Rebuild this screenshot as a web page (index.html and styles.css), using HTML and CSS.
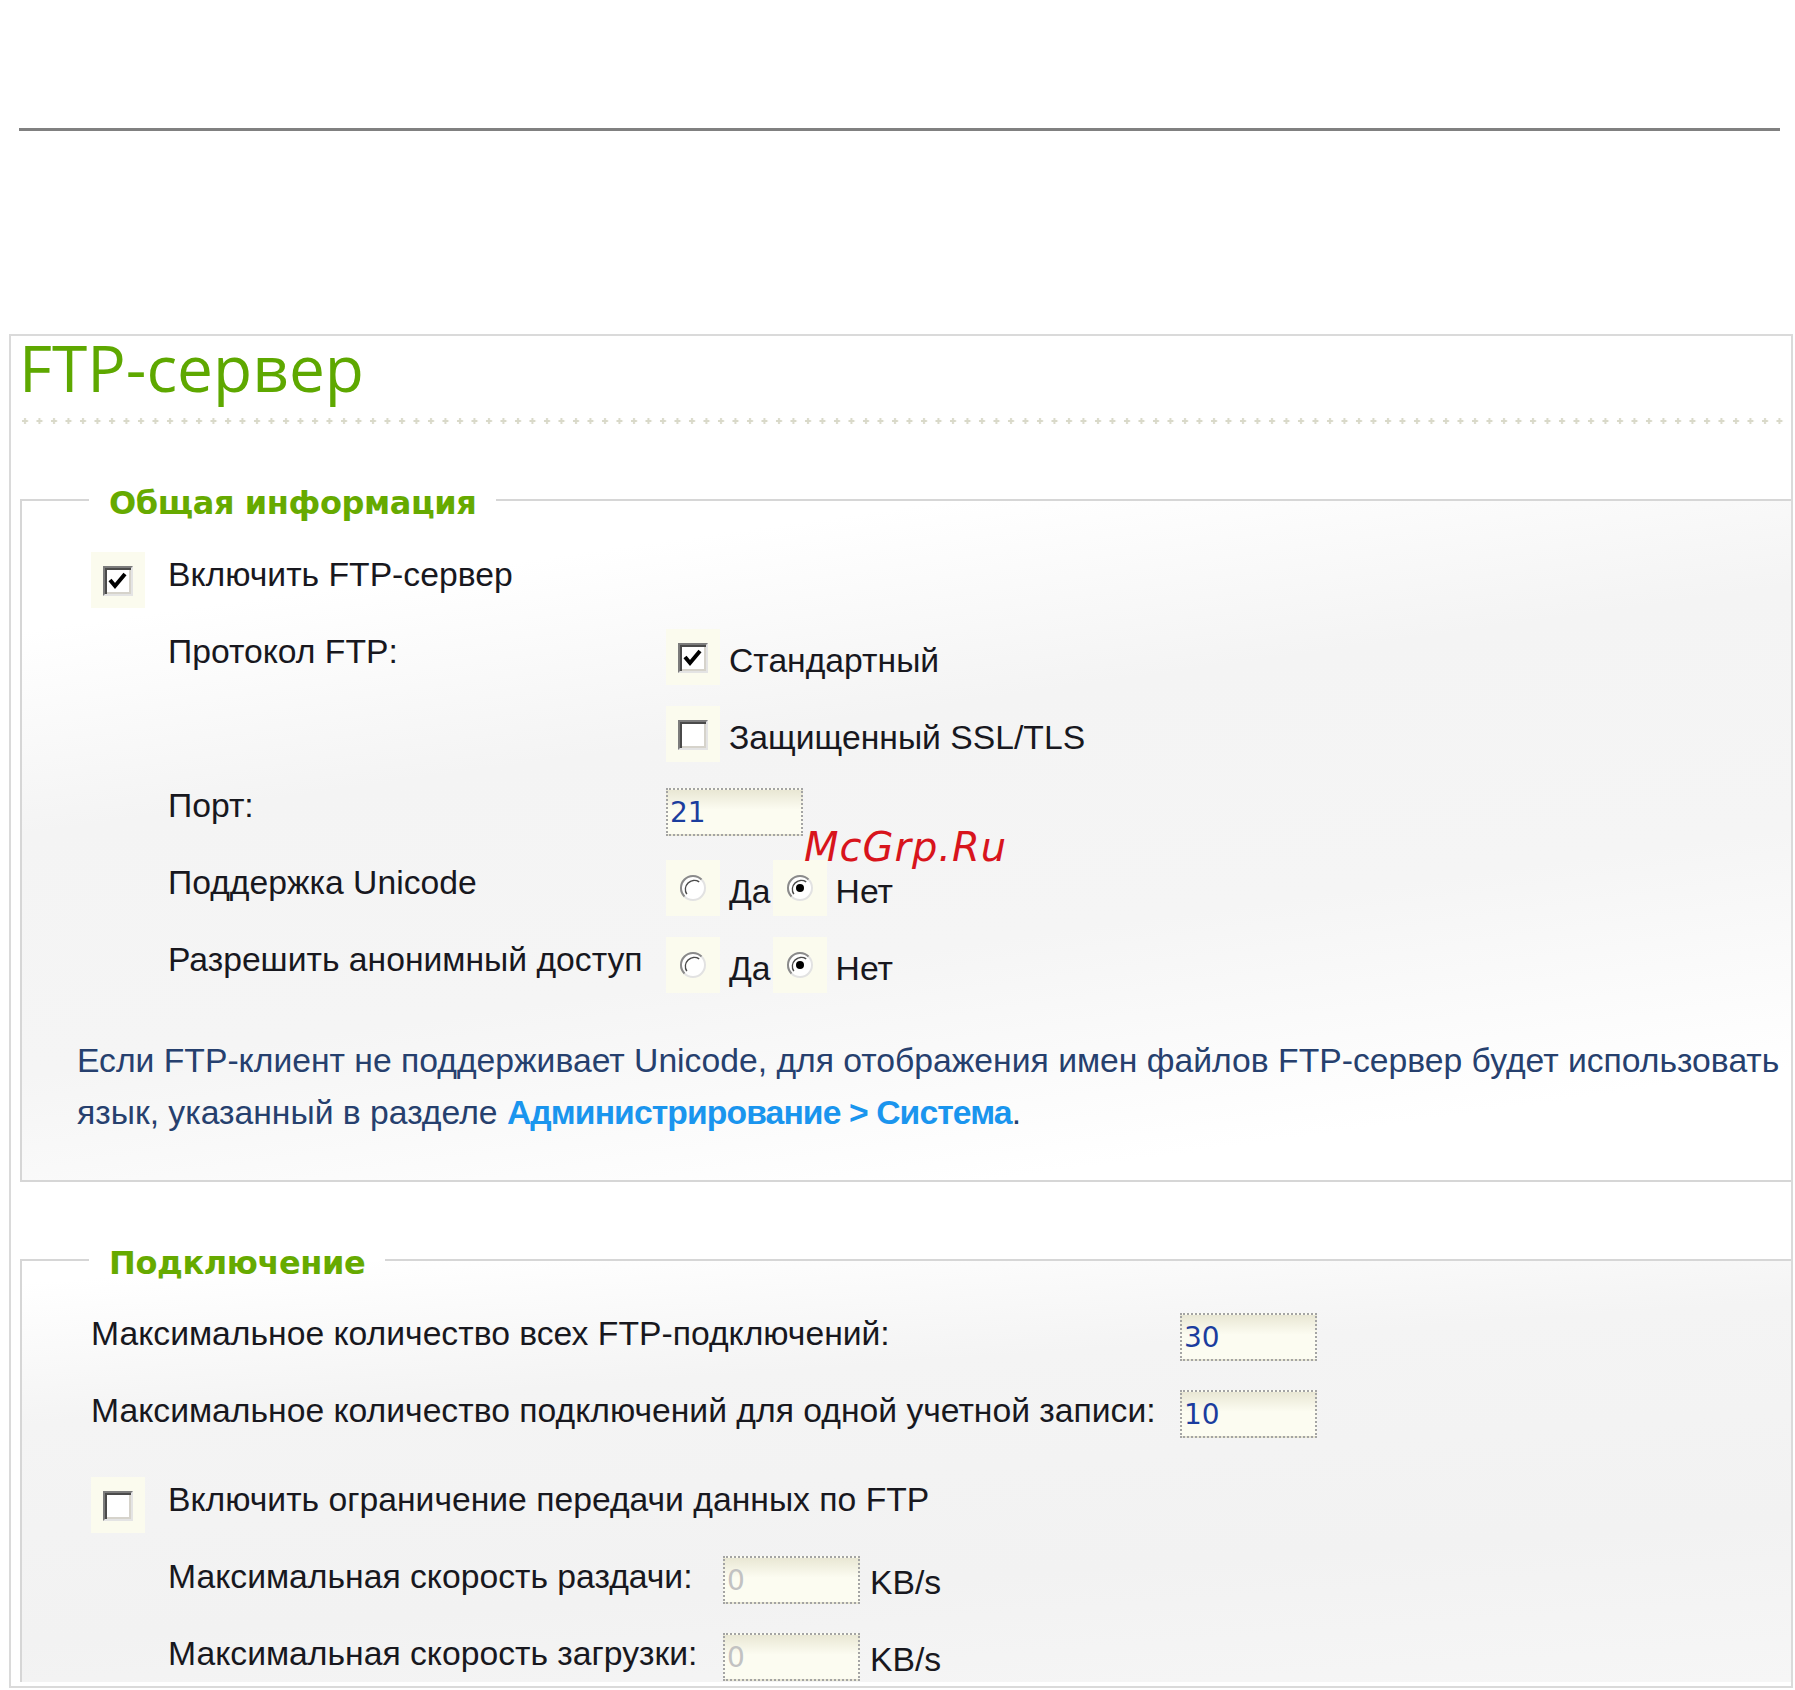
FILE: index.html
```html
<!DOCTYPE html>
<html lang="ru">
<head>
<meta charset="utf-8">
<title>FTP-сервер</title>
<link rel="stylesheet" href="styles.css">
</head>
<body>
<div class="page">
  <div class="top-rule"></div>
  <div class="panel">
    <h1 class="title">FTP-сервер</h1>
    <svg class="dots" width="100%" height="8">
      <defs>
        <pattern id="plus" x="0" y="0" width="14.5" height="8" patternUnits="userSpaceOnUse">
          <rect x="1" y="3" width="6" height="2" fill="#d9d9c9"/>
          <rect x="3" y="1" width="2" height="6" fill="#d9d9c9"/>
        </pattern>
      </defs>
      <rect x="0" y="0" width="100%" height="8" fill="url(#plus)"/>
    </svg>

    <fieldset class="group group-info">
      <legend>Общая информация</legend>
      <div class="form">
        <div class="row row-span">
          <span class="cell-box"><span class="cb"><svg viewBox="0 0 26 26" width="26" height="26"><polyline points="5,12 10,18 20,6" fill="none" stroke="#000" stroke-width="4"/></svg></span></span>
          <span class="label">Включить FTP-сервер</span>
        </div>
        <div class="row">
          <span></span>
          <span class="label">Протокол FTP:</span>
          <span class="ctrl">
            <span class="cell-box"><span class="cb"><svg viewBox="0 0 26 26" width="26" height="26"><polyline points="5,12 10,18 20,6" fill="none" stroke="#000" stroke-width="4"/></svg></span></span>
            <span class="opt-text">Стандартный</span>
          </span>
        </div>
        <div class="row">
          <span></span>
          <span class="label"></span>
          <span class="ctrl">
            <span class="cell-box"><span class="cb"></span></span>
            <span class="opt-text">Защищенный SSL/TLS</span>
          </span>
        </div>
        <div class="row">
          <span></span>
          <span class="label">Порт:</span>
          <span class="ctrl"><input class="field" type="text" value="21"></span>
        </div>
        <div class="row">
          <span></span>
          <span class="label">Поддержка Unicode</span>
          <span class="ctrl">
            <span class="cell-box"><svg class="radio" viewBox="0 0 28 28" width="28" height="28"><circle cx="14" cy="14" r="12" fill="#fff" stroke="#e2e2e2" stroke-width="2"/><path d="M5.5 22.5 A12 12 0 0 1 22.5 5.5" fill="none" stroke="#8a8a8a" stroke-width="2"/><path d="M7.8 20.2 A9 9 0 0 1 20.2 7.8" fill="none" stroke="#4a4a4a" stroke-width="1.5"/></svg></span>
            <span class="opt-text yes">Да</span>
            <span class="cell-box"><svg class="radio" viewBox="0 0 28 28" width="28" height="28"><circle cx="14" cy="14" r="12" fill="#fff" stroke="#e2e2e2" stroke-width="2"/><path d="M5.5 22.5 A12 12 0 0 1 22.5 5.5" fill="none" stroke="#8a8a8a" stroke-width="2"/><path d="M7.8 20.2 A9 9 0 0 1 20.2 7.8" fill="none" stroke="#4a4a4a" stroke-width="1.5"/><circle cx="14" cy="14" r="4" fill="#000"/></svg></span>
            <span class="opt-text">Нет</span>
          </span>
        </div>
        <div class="row">
          <span></span>
          <span class="label">Разрешить анонимный доступ</span>
          <span class="ctrl">
            <span class="cell-box"><svg class="radio" viewBox="0 0 28 28" width="28" height="28"><circle cx="14" cy="14" r="12" fill="#fff" stroke="#e2e2e2" stroke-width="2"/><path d="M5.5 22.5 A12 12 0 0 1 22.5 5.5" fill="none" stroke="#8a8a8a" stroke-width="2"/><path d="M7.8 20.2 A9 9 0 0 1 20.2 7.8" fill="none" stroke="#4a4a4a" stroke-width="1.5"/></svg></span>
            <span class="opt-text yes">Да</span>
            <span class="cell-box"><svg class="radio" viewBox="0 0 28 28" width="28" height="28"><circle cx="14" cy="14" r="12" fill="#fff" stroke="#e2e2e2" stroke-width="2"/><path d="M5.5 22.5 A12 12 0 0 1 22.5 5.5" fill="none" stroke="#8a8a8a" stroke-width="2"/><path d="M7.8 20.2 A9 9 0 0 1 20.2 7.8" fill="none" stroke="#4a4a4a" stroke-width="1.5"/><circle cx="14" cy="14" r="4" fill="#000"/></svg></span>
            <span class="opt-text">Нет</span>
          </span>
        </div>
      </div>
      <p class="note">Если FTP-клиент не поддерживает Unicode, для отображения имен файлов FTP-сервер будет использовать<br>язык, указанный в разделе <a class="link" href="#">Администрирование &gt; Система</a>.</p>
    </fieldset>

    <fieldset class="group group-conn">
      <legend>Подключение</legend>
      <div class="form">
        <div class="row row-wide">
          <span class="label">Максимальное количество всех FTP-подключений:</span>
          <span class="ctrl"><input class="field" type="text" value="30"></span>
        </div>
        <div class="row row-wide">
          <span class="label">Максимальное количество подключений для одной учетной записи:</span>
          <span class="ctrl"><input class="field" type="text" value="10"></span>
        </div>
        <div class="row row-span row-gap">
          <span class="cell-box"><span class="cb"></span></span>
          <span class="label">Включить ограничение передачи данных по FTP</span>
        </div>
        <div class="row row-speed">
          <span></span>
          <span class="label">Максимальная скорость раздачи:</span>
          <span class="ctrl"><input class="field off" type="text" value="0" disabled><span class="unit">KB/s</span></span>
        </div>
        <div class="row row-speed row-last">
          <span></span>
          <span class="label">Максимальная скорость загрузки:</span>
          <span class="ctrl"><input class="field off" type="text" value="0" disabled><span class="unit">KB/s</span></span>
        </div>
      </div>
    </fieldset>
  </div>
</div>
<div class="watermark">McGrp.Ru</div>
</body>
</html>
```

FILE: styles.css
```css
html, body {
  margin: 0;
  background: #fff;
}

body {
  position: relative;
  width: 1795px;
  height: 1690px;
  overflow: hidden;
  font-family: "Liberation Sans", Arial, sans-serif;
  color: #18181e;
}

.page {
  padding-top: 128px;
}

.top-rule {
  width: 1761px;
  height: 3px;
  margin-left: 19px;
  background: #808080;
}

.panel {
  box-sizing: border-box;
  width: 1784px;
  height: 1354px;
  margin: 203px 0 0 9px;
  border: 2px solid #dadada;
}

.title {
  margin: -4px 0 0 0;
  padding-left: 8px;
  font-family: "Open Sans", sans-serif;
  font-weight: 400;
  font-size: 64px;
  line-height: 72px;
  color: #5ea800;
}

.dots {
  display: block;
  width: calc(100% - 10px);
  height: 8px;
  margin: 13px 0 0 10px;
}

.group {
  margin: 54px 0 0 9px;
  padding: 0 0 42px 0;
  min-width: 0;
  border: 2px solid #d6d6d6;
  border-right: none;
  background: linear-gradient(172deg, #ffffff 14%, #f4f4f4 36%, #f5f5f5 62%, #ffffff 88%);
}

.group-conn {
  margin-top: 57px;
  padding-bottom: 0;
  border-bottom: none;
  background: linear-gradient(176deg, #ffffff 4%, #f4f4f4 30%, #f2f2f2 70%, #f6f6f6 100%);
}

.group legend {
  margin-left: 67px;
  padding: 6px 20px 0 20px;
  font-family: "DejaVu Sans", sans-serif;
  font-weight: bold;
  font-size: 32px;
  line-height: 36px;
  color: #66aa00;
  letter-spacing: -0.4px;
}

.form {
  margin-left: 69px;
  padding-top: 16px;
}

.group-conn .form {
  padding-top: 15px;
}

.row {
  display: grid;
  grid-template-columns: 77px 498px auto;
  align-items: start;
  box-sizing: border-box;
  height: 77px;
  padding-top: 15px;
}

.row-span .label {
  grid-column: 2 / 4;
}

.row-wide {
  grid-template-columns: 1089px auto;
}

.row-gap {
  margin-top: 12px;
}

.row-speed {
  grid-template-columns: 77px 555px auto;
}

.row-last {
  height: 66px;
}

.label {
  padding-top: 2px;
  font-size: 33.7px;
  line-height: 40px;
  white-space: nowrap;
}

.ctrl {
  display: flex;
  align-items: center;
}

.cell-box {
  display: flex;
  align-items: center;
  justify-content: center;
  width: 54px;
  height: 56px;
  background: #fbfbee;
}

.cb {
  display: block;
  box-sizing: border-box;
  width: 30px;
  height: 30px;
  border: 2px solid;
  border-color: #7c7c7c #e4e4e4 #e4e4e4 #7c7c7c;
  box-shadow: inset 2px 2px 0 #4a4a4a, inset -2px -2px 0 #d6d3cb;
  background: #fff;
  margin-top: 2px;
}

.cb svg {
  display: block;
}

.radio {
  display: block;
}

.opt-text {
  margin: 0 6px 0 9px;
  padding-top: 6px;
  font-size: 33.7px;
  line-height: 40px;
  white-space: nowrap;
}

.opt-text.yes {
  margin-right: 2px;
}

.field {
  box-sizing: border-box;
  width: 137px;
  height: 48px;
  margin: 5px 0 0 0;
  padding: 0 0 0 2px;
  border: 2px dotted #a4a4a4;
  background: linear-gradient(#e9e7d4, #fcfcf1 45%);
  font-family: "DejaVu Sans", sans-serif;
  font-size: 28px;
  color: #1b3d9e;
  outline: none;
}

.group-conn .field {
  margin-top: 2px;
}

.field.off {
  color: #c2c2c2;
  -webkit-text-fill-color: #c2c2c2;
  opacity: 1;
}

.unit {
  margin-left: 10px;
  padding-top: 6px;
  font-size: 33.7px;
  line-height: 40px;
}

.note {
  margin: 35px 0 0 55px;
  font-size: 33.7px;
  line-height: 52px;
  color: #26406e;
  white-space: nowrap;
}

.link {
  color: #1a95ee;
  font-weight: bold;
  letter-spacing: -0.9px;
  text-decoration: none;
}

.watermark {
  position: absolute;
  left: 804px;
  top: 826px;
  font-family: "DejaVu Sans", sans-serif;
  font-style: italic;
  font-size: 40px;
  line-height: 42px;
  letter-spacing: 1px;
  color: #d8141c;
}
```
